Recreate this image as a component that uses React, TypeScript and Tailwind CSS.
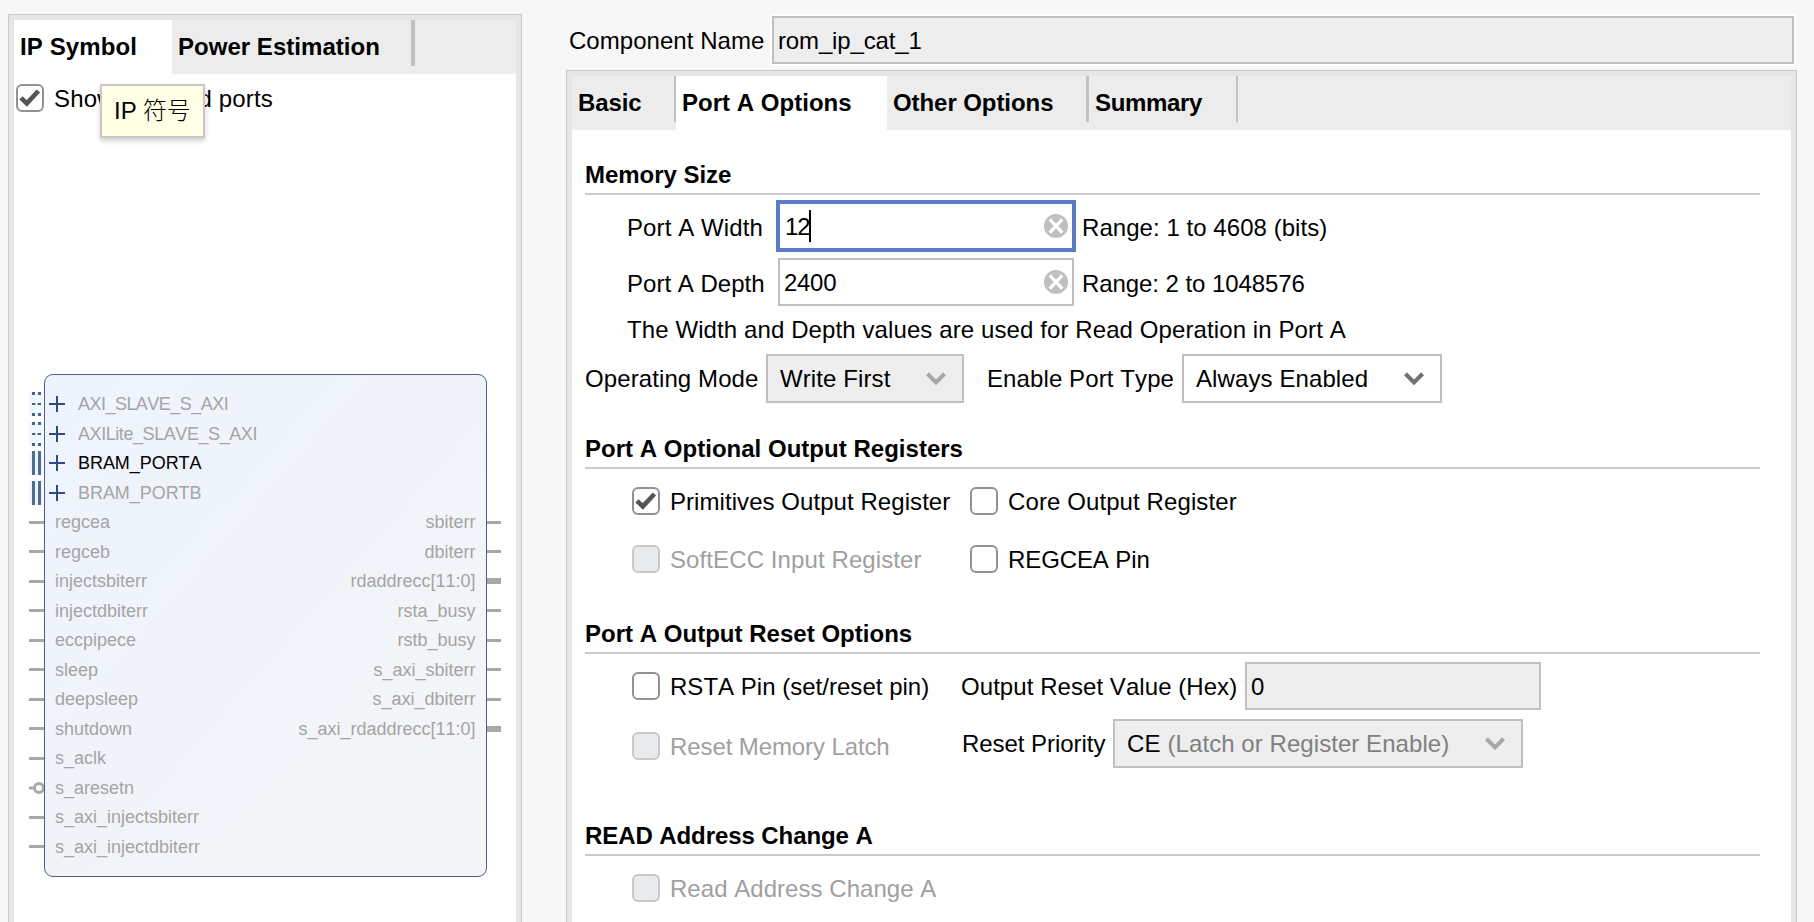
import React from "react";

const leftPins: { name: string; inverted?: boolean }[] = [
  { name: "regcea" },
  { name: "regceb" },
  { name: "injectsbiterr" },
  { name: "injectdbiterr" },
  { name: "eccpipece" },
  { name: "sleep" },
  { name: "deepsleep" },
  { name: "shutdown" },
  { name: "s_aclk" },
  { name: "s_aresetn", inverted: true },
  { name: "s_axi_injectsbiterr" },
  { name: "s_axi_injectdbiterr" },
];

const rightPins: { name: string; bus?: boolean }[] = [
  { name: "sbiterr" },
  { name: "dbiterr" },
  { name: "rdaddrecc[11:0]", bus: true },
  { name: "rsta_busy" },
  { name: "rstb_busy" },
  { name: "s_axi_sbiterr" },
  { name: "s_axi_dbiterr" },
  { name: "s_axi_rdaddrecc[11:0]", bus: true },
];

const interfaces = [
  { name: "AXI_SLAVE_S_AXI", dotted: true, style: "tracking-[-0.53px]" },
  { name: "AXILite_SLAVE_S_AXI", dotted: true, style: "tracking-[-0.43px]" },
  { name: "BRAM_PORTA", dotted: false, style: "tracking-[-0.05px] text-black" },
  { name: "BRAM_PORTB", dotted: false, style: "tracking-[-0.05px]" },
];

function Checkbox({ checked = false, disabled = false }: { checked?: boolean; disabled?: boolean }) {
  return (
    <span
      className={`flex h-7 w-7 shrink-0 items-center justify-center rounded-[6px] border-2 ${
        disabled ? "border-[#c8c8c8] bg-[#e9eaec]" : "border-[#929292] bg-white"
      }`}
    >
      {checked && (
        <svg width="24" height="24" viewBox="0 0 24 24" fill="none">
          <path d="M3 11.8 8.8 17.4 20.4 5" stroke="#555" strokeWidth="4.6" />
        </svg>
      )}
    </span>
  );
}

function CheckField({
  label,
  checked,
  disabled,
  className = "",
}: {
  label: string;
  checked?: boolean;
  disabled?: boolean;
  className?: string;
}) {
  return (
    <label className={`flex items-center ${className}`}>
      <Checkbox checked={checked} disabled={disabled} />
      <span className={`ml-[10px] pt-[2px] ${disabled ? "text-[#a0a0a0]" : ""}`}>{label}</span>
    </label>
  );
}

function ClearIcon() {
  return (
    <svg className="shrink-0" width="24" height="24" viewBox="0 0 24 24">
      <circle cx="12" cy="12" r="12" fill="#bfbfbf" />
      <path d="M5.8 5.4 18.2 18.6M18.2 5.4 5.8 18.6" stroke="#fff" strokeWidth="3.2" />
    </svg>
  );
}

function Chevron({ color }: { color: string }) {
  return (
    <svg className="shrink-0" width="20" height="14" viewBox="0 0 20 14" fill="none">
      <path d="M1.4 1.8 10 10.4 18.6 1.8" stroke={color} strokeWidth="4.2" />
    </svg>
  );
}

function Heading({ children, className = "" }: { children: React.ReactNode; className?: string }) {
  return (
    <h2 className={`h-[34px] w-[1175px] border-b-2 border-[#cacaca] font-bold ${className}`}>
      {children}
    </h2>
  );
}

function InterfaceBars({ dotted }: { dotted: boolean }) {
  return (
    <svg width="14" height="24" viewBox="0 0 14 24">
      <rect width="14" height="24" fill="#f0f7ff" />
      {dotted ? (
        <path d="M3 0h3v3h-3zM9 0h3v3h-3zM3 11h3.4v2h-3.4zM8.6 11h3.4v2h-3.4zM3 21h3v3h-3zM9 21h3v3h-3z" fill="#41648f" />
      ) : (
        <path d="M3 0h3v24h-3zM9 0h3v24h-3z" fill="#4a6b9b" />
      )}
    </svg>
  );
}

function SymbolBlock() {
  return (
    <div className="mt-[262px] ml-[15px] flex w-[472px] text-[18px] leading-[20px] tracking-normal">
      <div className="flex w-[15px] flex-col pt-[15.5px]">
        {interfaces.map((item) => (
          <div key={item.name} className="flex h-[29.5px] items-center">
            <InterfaceBars dotted={item.dotted} />
          </div>
        ))}
        {leftPins.map((pin) => (
          <div key={pin.name} className="flex h-[29.5px] items-center">
            {pin.inverted ? (
              <svg width="15" height="14" viewBox="0 0 15 14" fill="none" stroke="#a8a8a8" strokeWidth="3">
                <path d="M0 7h5" />
                <circle cx="10" cy="7" r="4.5" />
              </svg>
            ) : (
              <span className="h-[3px] w-[15px] bg-[#a8a8a8]" />
            )}
          </div>
        ))}
      </div>
      <div className="flex h-[503px] w-[443px] justify-between rounded-[9px] border border-[#4a5f8e] bg-linear-to-br from-[#eef4fe] via-[#f0f4f9] to-[#f4f5f7] pt-[14.5px] text-[#a4a4a4]">
        <div className="flex flex-col">
          {interfaces.map((item) => (
            <div key={item.name} className="flex h-[29.5px] items-center pl-1">
              <svg width="16" height="16" viewBox="0 0 16 16">
                <path d="M7 0h2v16h-2zM0 7h16v2h-16z" fill="#304b80" />
              </svg>
              <span className={`ml-[13px] ${item.style}`}>{item.name}</span>
            </div>
          ))}
          {leftPins.map((pin) => (
            <div key={pin.name} className="flex h-[29.5px] items-center pl-[10px]">
              {pin.name}
            </div>
          ))}
        </div>
        <div className="flex flex-col pt-[118px] pr-[10.5px]">
          {rightPins.map((pin) => (
            <div key={pin.name} className="flex h-[29.5px] items-center justify-end">
              {pin.name}
            </div>
          ))}
        </div>
      </div>
      <div className="flex w-[14px] flex-col pt-[133.5px]">
        {rightPins.map((pin) => (
          <div key={pin.name} className="flex h-[29.5px] items-center">
            <span className={`w-[14px] bg-[#a8a8a8] ${pin.bus ? "h-[6px]" : "h-[3px]"}`} />
          </div>
        ))}
      </div>
    </div>
  );
}

function SymbolPanel() {
  return (
    <section className="mt-[14px] ml-2 flex h-[908px] w-[514px] shrink-0 flex-col border border-b-0 border-[#c9c9c9] bg-[#e6e6e6] px-[5px] pt-[5px]">
      <div className="flex h-[54px] bg-[#ececec] font-bold tracking-[0.03px]">
        <div className="w-[158px] bg-white pt-[13px] pl-[6px] tracking-[0.1px]">IP Symbol</div>
        <div className="w-[239px] pt-[13px] pl-[6px]">Power Estimation</div>
        <div className="h-[46px] w-1 bg-[#c2c2c2]" />
      </div>
      <div className="relative flex-1 bg-white pt-[10px]">
        <CheckField label="Show disabled ports" checked className="h-7 pl-[2px] tracking-[0.15px]" />
        <div className="absolute top-[10px] left-[86px] flex h-[54px] w-[105px] items-center border-2 border-[#c8c8c8] bg-[#ffffe6] pl-[12px] shadow-[0_3px_5px_rgba(0,0,0,0.18)]">
          IP<span className="ml-[6px] font-light tracking-[-0.2px]">符号</span>
        </div>
        <SymbolBlock />
      </div>
    </section>
  );
}

function OptionsPanel() {
  return (
    <section className="mt-[6px] flex w-[1231px] flex-1 flex-col border border-b-0 border-[#c9c9c9] bg-[#e6e6e6] px-[5px] pt-[5px]">
      <div className="flex h-[54px] shrink-0 bg-[#ececec] pr-2 font-bold tracking-[0.02px]">
        <div className="w-[102px] pt-[13px] pl-[6px] tracking-[-0.1px]">Basic</div>
        <div className="h-[46px] w-[2px] bg-[#c2c2c2]" />
        <div className="w-[211px] bg-white pt-[13px] pl-[6px]">Port A Options</div>
        <div className="w-[199px] pt-[13px] pl-[6px] tracking-[-0.07px]">Other Options</div>
        <div className="h-[46px] w-[3px] bg-[#c2c2c2]" />
        <div className="w-[147px] pt-[13px] pl-[6px] tracking-[-0.35px]">Summary</div>
        <div className="h-[46px] w-[2px] bg-[#c2c2c2]" />
      </div>

      <div className="flex-1 bg-white pl-[13px]">
        <Heading className="mt-[31px] tracking-[-0.04px]">Memory Size</Heading>
        <div className="mt-[5px] flex h-[52px] items-center pl-[42px]">
          <span className="w-[149px] pt-1">Port A Width</span>
          <div className="flex h-[52px] w-[300px] items-center border-4 border-[#5a7bc5] bg-white pr-1 pl-[5px]">
            <span className="w-[24px] pt-[2px] tracking-[-1.2px]">12</span>
            <span className="h-8 w-[2px] bg-black" />
            <span className="flex-1" />
            <ClearIcon />
          </div>
          <span className="ml-[6px] pt-1 tracking-[0.05px]">Range: 1 to 4608 (bits)</span>
        </div>
        <div className="mt-[6px] flex h-12 items-center pl-[42px]">
          <span className="w-[151px] pt-[3px] tracking-[0.02px]">Port A Depth</span>
          <div className="flex h-12 w-[296px] items-center justify-between border-2 border-[#c0c0c0] bg-white pr-1 pl-[4px]">
            <span className="pt-[2px] tracking-[-0.3px]">2400</span>
            <ClearIcon />
          </div>
          <span className="ml-[8px] pt-[3px] tracking-[-0.07px]">Range: 2 to 1048576</span>
        </div>
        <p className="mt-[10px] h-7 pl-[42px]">The Width and Depth values are used for Read Operation in Port A</p>
        <div className="mt-[10px] flex h-[49px] items-center">
          <span className="w-[181px]">Operating Mode</span>
          <div className="flex h-[49px] w-[198px] items-center justify-between border-2 border-[#c0c0c0] bg-[#eee] pr-4 pl-3">
            Write First
            <Chevron color="#a8a8a8" />
          </div>
          <span className="ml-[23px] w-[195px]">Enable Port Type</span>
          <div className="flex h-[49px] w-[260px] items-center justify-between border-2 border-[#c0c0c0] bg-white pr-4 pl-3">
            Always Enabled
            <Chevron color="#737373" />
          </div>
        </div>

        <Heading className="mt-8 tracking-[0.02px]">Port A Optional Output Registers</Heading>
        <div className="mt-[18px] flex pl-[47px]">
          <CheckField label="Primitives Output Register" checked className="h-7 w-[338px] tracking-[0.06px]" />
          <CheckField label="Core Output Register" className="h-7" />
        </div>
        <div className="mt-[30px] flex pl-[47px]">
          <CheckField label="SoftECC Input Register" disabled className="h-7 w-[338px]" />
          <CheckField label="REGCEA Pin" className="h-7 tracking-[-0.1px]" />
        </div>

        <Heading className="mt-[47px] tracking-[0.02px]">Port A Output Reset Options</Heading>
        <div className="mt-2 flex h-12 items-center pl-[47px]">
          <CheckField label="RSTA Pin (set/reset pin)" className="w-[329px] tracking-[0.02px]" />
          <span className="w-[284px] pt-[2px] tracking-[0.06px]">Output Reset Value (Hex)</span>
          <div className="flex h-12 w-[296px] items-center border-2 border-[#c0c0c0] bg-[#eee] pt-[2px] pl-1">0</div>
        </div>
        <div className="mt-[9px] flex h-[49px] items-center pl-[47px]">
          <CheckField label="Reset Memory Latch" disabled className="w-[330px] pt-[5px] tracking-[-0.1px]" />
          <span className="w-[151px] tracking-[-0.05px]">Reset Priority</span>
          <div className="flex h-[49px] w-[410px] items-center border-2 border-[#c0c0c0] bg-[#eee] pr-4 pl-3">
            CE<span className="ml-[7px] flex-1 tracking-[0.06px] text-[#808080]">(Latch or Register Enable)</span>
            <Chevron color="#a8a8a8" />
          </div>
        </div>

        <Heading className="mt-[54px] tracking-[-0.08px]">READ Address Change A</Heading>
        <CheckField label="Read Address Change A" disabled className="mt-[18px] ml-[47px] h-7 tracking-[0.04px]" />
      </div>
    </section>
  );
}

export default function App() {
  return (
    <main className="flex h-[922px] w-[1814px] overflow-hidden bg-[#f7f7f7] font-['Liberation_Sans','Noto_Sans_CJK_SC',sans-serif] text-[24px] leading-[28px] tracking-[0.1px] whitespace-nowrap text-black [font-kerning:none]">
      <SymbolPanel />
      <div className="ml-[44px] flex flex-col pt-4">
        <div className="flex h-12 items-center pl-[3px]">
          <span className="w-[203px] pt-[2px] tracking-[0.04px]">Component Name</span>
          <div className="flex h-12 w-[1022px] items-center border-2 border-[#c0c0c0] bg-[#eee] pt-[2px] pl-1 tracking-[-0.15px] outline-2 outline-white">
            rom_ip_cat_1
          </div>
        </div>
        <OptionsPanel />
      </div>
    </main>
  );
}
